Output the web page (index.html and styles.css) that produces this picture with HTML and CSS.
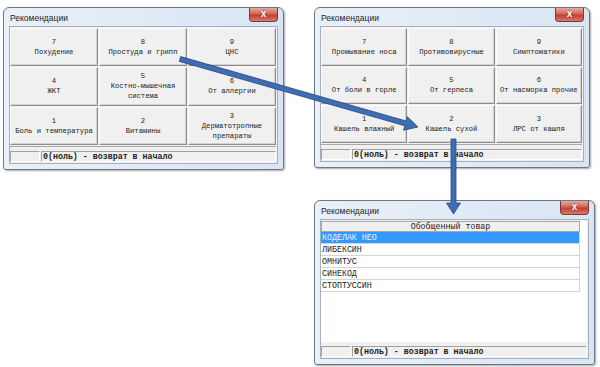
FILE: index.html
```html
<!DOCTYPE html>
<html lang="ru">

<head>
    <meta charset="UTF-8">
    <title>Рекомендации</title>
    <link rel="stylesheet" href="styles.css">
</head>

<body>
    <!-- окно 1: основные группы -->
    <div class="win win-a">
        <div class="titlebar">
            <span class="title">Рекомендации</span>
            <span class="close">x</span>
        </div>
        <div class="client">
            <div class="keys">
                <div class="key"><span>7</span><span>Похудение</span></div>
                <div class="key"><span>8</span><span>Простуда и грипп</span></div>
                <div class="key"><span>9</span><span>ЦНС</span></div>
                <div class="key"><span>4</span><span>ЖКТ</span></div>
                <div class="key"><span>5</span><span>Костно-мышечная<br>система</span></div>
                <div class="key"><span>6</span><span>От аллергии</span></div>
                <div class="key"><span>1</span><span>Боль и температура</span></div>
                <div class="key"><span>2</span><span>Витамины</span></div>
                <div class="key"><span>3</span><span>Дерматотропные<br>препараты</span></div>
            </div>
            <div class="status">
                <span class="cell first"></span>
                <span class="cell msg">0(ноль) - возврат в начало</span>
            </div>
        </div>
    </div>

    <!-- окно 2: простуда и грипп -->
    <div class="win win-b">
        <div class="titlebar">
            <span class="title">Рекомендации</span>
            <span class="close">x</span>
        </div>
        <div class="client">
            <div class="keys">
                <div class="key"><span>7</span><span>Промывание носа</span></div>
                <div class="key"><span>8</span><span>Противовирусные</span></div>
                <div class="key"><span>9</span><span>Симптоматики</span></div>
                <div class="key"><span>4</span><span>От боли в горле</span></div>
                <div class="key"><span>5</span><span>От герпеса</span></div>
                <div class="key"><span>6</span><span>От насморка прочие</span></div>
                <div class="key"><span>1</span><span>Кашель влажный</span></div>
                <div class="key"><span>2</span><span>Кашель сухой</span></div>
                <div class="key"><span>3</span><span>ЛРС от кашля</span></div>
            </div>
            <div class="status">
                <span class="cell first"></span>
                <span class="cell msg">0(ноль) - возврат в начало</span>
            </div>
        </div>
    </div>

    <!-- окно 3: список товаров -->
    <div class="win win-c">
        <div class="titlebar">
            <span class="title">Рекомендации</span>
            <span class="close">x</span>
        </div>
        <div class="client">
            <div class="list">
                <div class="table">
                    <div class="thead">Обобщенный товар</div>
                    <div class="row selected">КОДЕЛАК НЕО</div>
                    <div class="row">ЛИБЕКСИН</div>
                    <div class="row">ОМНИТУС</div>
                    <div class="row">СИНЕКОД</div>
                    <div class="row">СТОПТУССИН</div>
                </div>
            </div>
            <div class="status">
                <span class="cell first"></span>
                <span class="cell msg">0(ноль) - возврат в начало</span>
            </div>
        </div>
    </div>

    <!-- стрелки поверх окон -->
    <svg class="arrows" width="600" height="367" viewBox="0 0 600 367">
        <polygon points="180.7,56.6 406.2,121 407.4,116.7 418,127 403.6,130.2 404.8,125.8 179.3,61.4" />
        <polygon points="451,139 456,139 456,203 460.5,203 453.5,214 446.5,203 451,203" />
    </svg>
</body>

</html>
```

FILE: styles.css
```css
body {
    margin: 0;
    width: 600px;
    height: 367px;
    position: relative;
    overflow: hidden;
    background-color: #fff;
    font-family: "Liberation Mono", "Courier New", monospace;
    color: #1c1c1c;
}

/* окна лежат на "рабочем столе" по своим местам */
.win {
    position: absolute;
    box-sizing: border-box;
    display: flex;
    flex-direction: column;
    padding: 0 5px 5px;
    border: 1px solid #6b7886;
    border-radius: 6px 6px 3px 3px;
    background: linear-gradient(to right, #eaf0f8, #d9e5f3);
    box-shadow: 1px 1px 2px rgba(0, 0, 0, .35);
}

.win-a {
    left: 3px;
    top: 7px;
    width: 281px;
    height: 163px;
}

.win-b {
    left: 314px;
    top: 7px;
    width: 276px;
    height: 161px;
}

.win-c {
    left: 314px;
    top: 200px;
    width: 281px;
    height: 165px;
}

.titlebar {
    flex: none;
    height: 18px;
    display: flex;
    justify-content: space-between;
    align-items: center;
}

.title {
    font: 8.5px "Liberation Sans", Arial, sans-serif;
    color: #1e1e1e;
    padding: 1px 0 0 1px;
}

.close {
    align-self: flex-start;
    width: 29px;
    height: 14px;
    box-sizing: border-box;
    border: 1px solid #7a3b36;
    border-top: none;
    border-radius: 0 0 4px 4px;
    background: linear-gradient(#e9a99e, #d0665a 45%, #c23f32 55%, #d9796a);
    color: #fff;
    font: bold 10px/12px "Liberation Sans", Arial, sans-serif;
    text-align: center;
    text-shadow: 0 0 2px #6b2019;
}

.client {
    flex: 1;
    display: flex;
    flex-direction: column;
    padding: 1px 1px 1px 0;
    border: 1px solid #a2b0c0;
    background-color: #f0f0f0;
}

.keys {
    flex: 1;
    display: grid;
    grid-template-columns: repeat(3, 1fr);
    grid-template-rows: repeat(3, 1fr);
    gap: 1px;
    padding-bottom: 1px;
    border-bottom: 1px solid #a8a8a8;
}

.key {
    display: flex;
    flex-direction: column;
    justify-content: center;
    align-items: center;
    text-align: center;
    font-size: 7.2px;
    line-height: 10px;
    background-color: #f0f0f0;
    border: 1px solid;
    border-color: #fdfdfd #8e8e8e #8e8e8e #fdfdfd;
    box-shadow: inset -1px -1px 0 #d2d2d2;
}

.status {
    flex: none;
    display: flex;
    gap: 1px;
    height: 11px;
    margin-top: 4px;
}

.cell {
    box-sizing: border-box;
    border: 1px solid;
    border-color: #a0a0a0 #fff #fff #a0a0a0;
}

.first {
    width: 30px;
}

.msg {
    flex: 1;
    padding-left: 1px;
    font-size: 8.3px;
    font-weight: bold;
    line-height: 9px;
    white-space: nowrap;
}

/* список товаров */
.list {
    flex: 1;
    background-color: #fff;
}

.table {
    width: calc(100% - 7px);
    font-size: 8.3px;
}

.thead {
    height: 11px;
    box-sizing: border-box;
    border: 1px solid #a8a8a8;
    background-color: #efefef;
    text-align: center;
    line-height: 9px;
}

.row {
    height: 12px;
    box-sizing: border-box;
    padding-left: 1px;
    border-bottom: 1px solid #d4d4d4;
    border-right: 1px solid #d4d4d4;
    line-height: 11px;
}

.selected {
    background-color: #3399ff;
    color: #eaf4ff;
}

.arrows {
    position: absolute;
    left: 0;
    top: 0;
    pointer-events: none;
}

.arrows polygon {
    fill: #3f6db4;
    stroke: #274a7c;
    stroke-width: .8;
}
```
